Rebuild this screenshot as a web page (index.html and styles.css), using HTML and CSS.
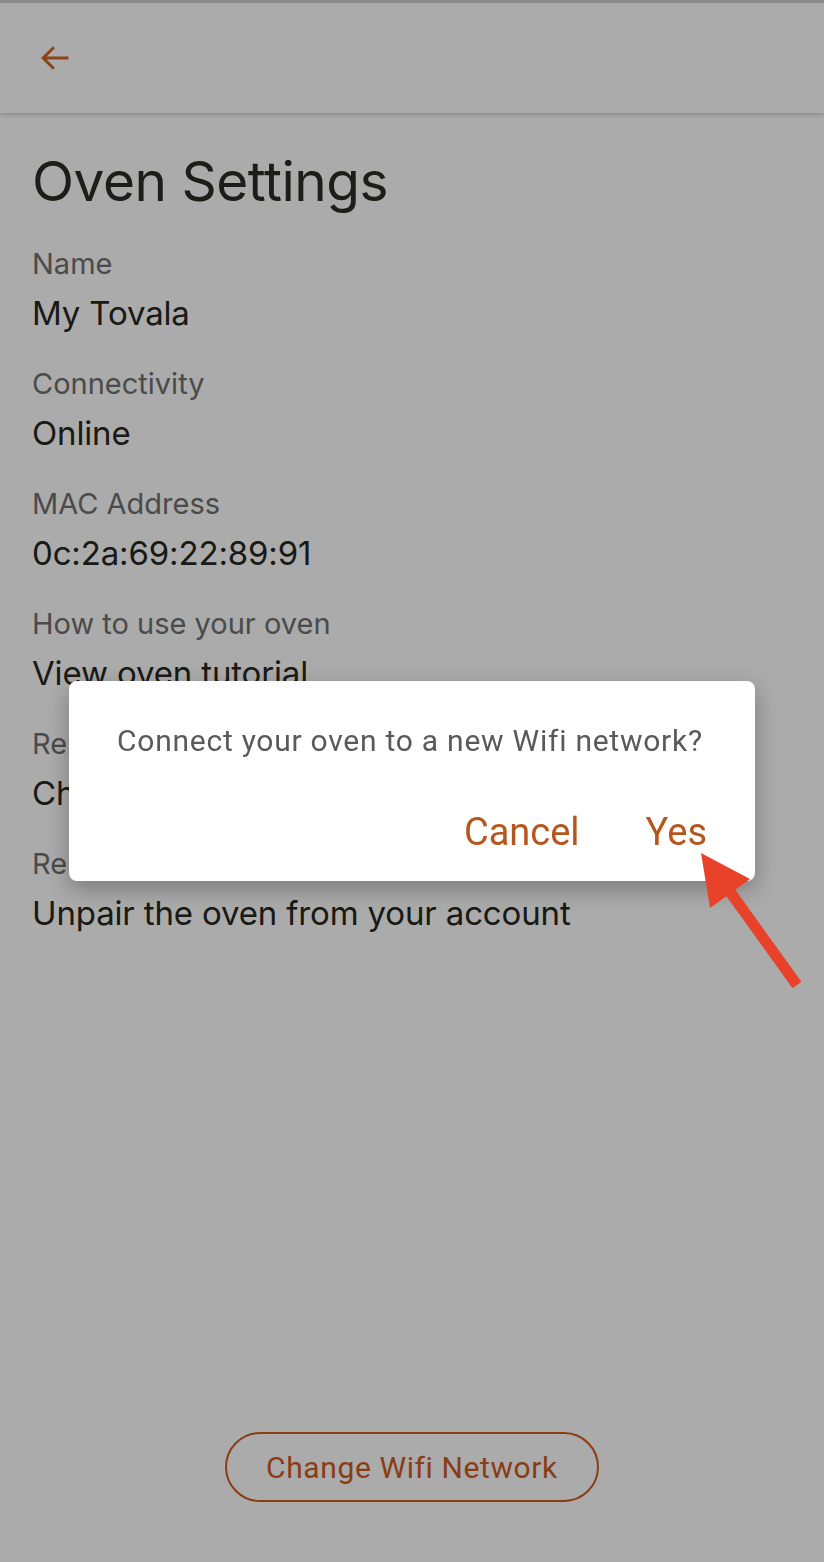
FILE: index.html
```html
<!DOCTYPE html>
<html lang="en">
<head>
<meta charset="utf-8">
<title>Oven Settings</title>
<link rel="stylesheet" href="styles.css">
</head>
<body>
<div class="screen">
  <header class="appbar">
    <button class="back" aria-label="Back">
      <svg viewBox="0 0 24 24" width="38" height="38"><path d="M20.5 12H4.5M11.3 5.2L4.5 12l6.8 6.8" fill="none" stroke="currentColor" stroke-width="1.9"/></svg>
    </button>
  </header>
  <main class="content">
    <h1 class="title">Oven Settings</h1>
    <dl class="settings">
      <div class="item"><dt>Name</dt><dd>My Tovala</dd></div>
      <div class="item"><dt>Connectivity</dt><dd>Online</dd></div>
      <div class="item"><dt>MAC Address</dt><dd>0c:2a:69:22:89:91</dd></div>
      <div class="item"><dt>How to use your oven</dt><dd>View oven tutorial</dd></div>
      <div class="item"><dt>Reset oven</dt><dd>Change Wifi network</dd></div>
      <div class="item"><dt>Remove oven</dt><dd>Unpair the oven from your account</dd></div>
    </dl>
  </main>
  <div class="footer">
    <button class="outline-btn">Change Wifi Network</button>
  </div>
</div>
<div class="scrim">
  <div class="dialog">
    <p class="dialog-text">Connect your oven to a new Wifi network?</p>
    <div class="dialog-actions">
      <button class="text-btn">Cancel</button>
      <button class="text-btn">Yes</button>
    </div>
  </div>
</div>
<svg class="annotation" width="824" height="1562" viewBox="0 0 824 1562">
  <line x1="797" y1="985" x2="728" y2="889" stroke="#e8432a" stroke-width="11"/>
  <polygon points="701,853 750,879 710,908" fill="#e8432a"/>
</svg>
</body>
</html>
```
FILE: styles.css
```css
* { box-sizing: border-box; }
html, body { margin: 0; padding: 0; }
body {
  width: 824px;
  height: 1562px;
  background: #ffffff;
  font-family: Inter, Roboto, "Liberation Sans", sans-serif;
  overflow: hidden;
  position: relative;
}
.screen {
  height: 1562px;
  display: flex;
  flex-direction: column;
}
.appbar {
  height: 113px;
  flex: none;
  background: #ffffff;
  box-shadow: 0 2px 4px rgba(0,0,0,0.18);
  display: flex;
  align-items: center;
  padding-left: 36px;
  border-top: 3px solid #d0d0d0;
}
.back {
  border: 0;
  background: none;
  padding: 0;
  color: #d06424;
  display: flex;
}
.content {
  flex: 1;
  padding: 0 32px;
}
.title {
  margin: 36px 0 29px;
  font-size: 55px;
  line-height: 64px;
  font-weight: 400;
  color: #2d2d26;
  letter-spacing: -0.5px;
}
.settings { margin: 0; }
.item { margin-bottom: 22px; }
.item dt {
  font-size: 29px;
  line-height: 44px;
  color: #707070;
}
.item dd {
  margin: 0;
  font-size: 33px;
  line-height: 54px;
  color: #27271f;
  letter-spacing: -0.15px;
}
.footer {
  display: flex;
  justify-content: center;
  padding-bottom: 60px;
}
.outline-btn {
  width: 374px;
  height: 70px;
  border: 2px solid #ce5b1e;
  border-radius: 35px;
  background: none;
  font-family: Roboto, "Liberation Sans", sans-serif;
  font-size: 30px;
  color: #ce5b1e;
  letter-spacing: 0.6px;
}
.scrim {
  position: fixed;
  inset: 0;
  background: rgba(0,0,0,0.33);
  display: flex;
  align-items: center;
  justify-content: center;
}
.dialog {
  width: 686px;
  height: 200px;
  background: #ffffff;
  border-radius: 8px;
  box-shadow: 0 8px 24px rgba(0,0,0,0.3);
  padding: 40px 48px 0 48px;
}
.dialog-text {
  margin: 0;
  font-family: Roboto, "Liberation Sans", sans-serif;
  font-size: 30px;
  line-height: 40px;
  color: #5a5a5a;
  letter-spacing: 0.75px;
}
.dialog-actions {
  display: flex;
  justify-content: flex-end;
  gap: 66px;
  margin-top: 49px;
}
.text-btn {
  border: 0;
  background: none;
  padding: 0;
  font-family: Roboto, "Liberation Sans", sans-serif;
  font-size: 38px;
  line-height: 44px;
  color: #b5561f;
}
.annotation {
  position: absolute;
  left: 0;
  top: 0;
  pointer-events: none;
}
```
